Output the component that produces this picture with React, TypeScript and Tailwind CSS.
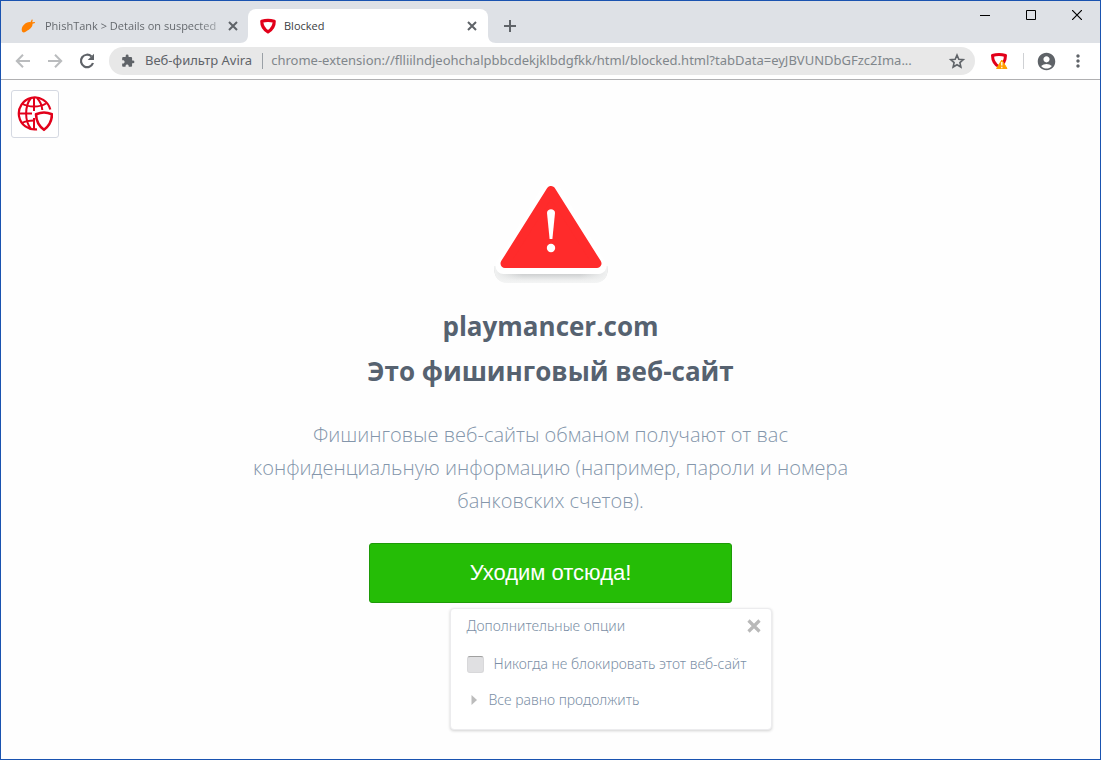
import type { ReactNode } from "react";
import { MdAccountCircle, MdExtension, MdMoreVert } from "react-icons/md";

function PhishIcon() {
  return (
    <svg viewBox="0 0 16 16" className="h-4 w-4 shrink-0" aria-hidden="true">
      <path
        d="M2 13.500C1.100 10.900 2.200 8.300 4 6.700 5.900 4.900 8.200 3.800 10.400 4.200L11.800 1.400l1 .3-.6 2.600 2.600-.4.200 1-2.500.9c.2 1.800-.7 3.300-1.900 4.500C9 12.100 7.800 12.200 6.400 13.300c-1.300 1.100-3 1.700-4.400.2z"
        fill="#ff8000"
      />
    </svg>
  );
}

function ShieldIcon() {
  return (
    <svg viewBox="0 0 16 16" className="h-4 w-4 shrink-0" aria-hidden="true">
      <path
        d="M8 2.300c2.300 0 4 .3 6.200 1 .1 4.600-1.900 8-6.200 10.600C3.700 11.300 1.700 7.900 1.800 3.300 4 2.600 5.700 2.300 8 2.300z"
        fill="#fff"
        stroke="#e2001a"
        strokeWidth="3.200"
        strokeLinejoin="round"
      />
    </svg>
  );
}

function ShieldWarningIcon() {
  return (
    <svg viewBox="0 0 18 18" className="h-[18px] w-[18px]" aria-hidden="true">
      <path
        d="M9 2.500c2.300 0 4.300.3 6.500 1-.1 5-2 8.800-6.500 11.200C4.500 12.300 2.600 8.500 2.500 3.500c2.200-.7 4.200-1 6.500-1z"
        fill="#fff"
        stroke="#e2001a"
        strokeWidth="3"
        strokeLinejoin="round"
      />
      <path d="M11.800 8 17 16.500H6.600z" fill="#ffa000" stroke="#ffa000" strokeLinejoin="round" />
      <path d="M11.800 10v3.600M11.800 14.800v1.400" stroke="#fff" strokeWidth="1.300" />
    </svg>
  );
}

function GlobeShieldLogo() {
  return (
    <svg viewBox="0 0 36 36" className="h-9 w-9" fill="none" stroke="#e2001a" strokeWidth="2" aria-hidden="true">
      <path d="M33.300 13.500A16 16 0 1 0 20 33.300" strokeWidth="2.200" />
      <path d="M17 1v14M17 22v11M1 17.500h14" />
      <path d="M14 2C7.500 10 7.500 25 14 33" />
      <path d="M20 2c3.500 3.600 5 7.600 5.300 12" />
      <path d="M5 7.500c6.500 4 17.500 4 24 0" />
      <path d="M5 27c3-1.700 7-2.500 12-2.500" />
      <path
        d="M27 16.500c3 0 5.600.8 8 1.800-.2 6.800-2.700 11.700-8 15.500-5.300-3.800-7.800-8.700-8-15.500 2.400-1 5-1.800 8-1.800z"
        fill="#fff"
        strokeWidth="2.600"
        strokeLinejoin="round"
      />
    </svg>
  );
}

function WarningTriangle() {
  return (
    <svg viewBox="0 0 122 108" className="h-[108px] w-[122px]" role="img" aria-label="Внимание">
      <defs>
        <linearGradient id="shade" x1="0" y1="84" x2="0" y2="103" gradientUnits="userSpaceOnUse">
          <stop offset="0.500" stopColor="#cbcdce" />
          <stop offset="0.850" stopColor="#eeefef" />
          <stop offset="1" stopColor="#f4f5f5" />
        </linearGradient>
        <linearGradient id="fade" x1="0" y1="0" x2="1" y2="0">
          <stop offset="0" stopColor="#f2f3f3" />
          <stop offset="0.250" stopColor="#f2f3f3" stopOpacity="0" />
          <stop offset="0.750" stopColor="#f2f3f3" stopOpacity="0" />
          <stop offset="1" stopColor="#f2f3f3" />
        </linearGradient>
      </defs>
      <path d="M4 86h114c0 12-5 17-14 17H18C9 103 4 98 4 86z" fill="url(#shade)" />
      <path d="M4 86h114c0 12-5 17-14 17H18C9 103 4 98 4 86z" fill="url(#fade)" />
      <path
        d="M61 8 108.500 86H13.500z"
        fill="#fff"
        stroke="#fff"
        strokeWidth="16"
        strokeLinejoin="round"
      />
      <path
        d="M61 10.500 107 83.500H15z"
        fill="#ff2b2b"
        stroke="#ff2b2b"
        strokeWidth="9"
        strokeLinejoin="round"
      />
      <path d="M57 33c0-5 8-5 8 0l-2.600 26h-2.800z" fill="#fff" />
      <circle cx="61" cy="68" r="4.200" fill="#fff" />
    </svg>
  );
}

function LineIcon({ d }: { d: string }) {
  return (
    <svg
      viewBox="0 0 20 20"
      className="h-5 w-5 shrink-0"
      fill="none"
      stroke="currentColor"
      strokeWidth="2"
      aria-hidden="true"
    >
      <path d={d} />
    </svg>
  );
}

function IconButton({ label, className, children }: { label: string; className: string; children: ReactNode }) {
  return (
    <button type="button" aria-label={label} className={`flex shrink-0 items-center justify-center ${className}`}>
      {children}
    </button>
  );
}

const CLOSE = "m6 6 8 8M14 6l-8 8";

function TabStrip() {
  return (
    <div className="flex h-[42px] items-start bg-[#dee1e6] pl-2">
      <div className="flex min-w-0 flex-1 items-end pt-2">
        <div className="flex h-[34px] w-[239px] items-center pr-[7px] pl-[11px]">
          <PhishIcon />
          <span className="ml-[9px] flex-1 bg-linear-to-r from-[#5f6368] from-85% to-[#5f636840] bg-clip-text text-[11px] whitespace-nowrap text-transparent">
            PhishTank &gt; Details on suspected
          </span>
          <IconButton label="Закрыть вкладку" className="h-4 w-4 text-[#5f6368]">
            <LineIcon d={CLOSE} />
          </IconButton>
        </div>
        <svg viewBox="0 0 8 8" className="-ml-2 h-2 w-2 shrink-0" aria-hidden="true">
          <path d="M8 0v8H0c5 0 8-3 8-8z" fill="#fff" />
        </svg>
        <div className="flex h-[34px] w-60 items-center rounded-t-lg bg-white pr-2 pl-3">
          <ShieldIcon />
          <span className="ml-2 flex-1 text-[11px] text-[#3c4043]">Blocked</span>
          <IconButton label="Закрыть вкладку" className="h-4 w-4 text-[#5f6368]">
            <LineIcon d={CLOSE} />
          </IconButton>
        </div>
        <svg viewBox="0 0 8 8" className="h-2 w-2 shrink-0" aria-hidden="true">
          <path d="M0 0v8h8C3 8 0 5 0 0z" fill="#fff" />
        </svg>
        <IconButton label="Новая вкладка" className="h-[34px] w-7 text-[#5f6368]">
          <LineIcon d="M10 4v12M4 10h12" />
        </IconButton>
      </div>
      <div className="flex text-black">
        <IconButton label="Свернуть" className="h-7 w-[46px]">
          <svg viewBox="0 0 10 10" className="h-[10px] w-[10px]" aria-hidden="true">
            <path d="M0 5.500h10" stroke="currentColor" />
          </svg>
        </IconButton>
        <IconButton label="Развернуть" className="h-7 w-[46px]">
          <svg viewBox="0 0 10 10" className="h-[10px] w-[10px]" aria-hidden="true">
            <path d="M.5.5h9v9h-9z" fill="none" stroke="currentColor" />
          </svg>
        </IconButton>
        <IconButton label="Закрыть" className="h-7 w-[46px]">
          <svg viewBox="0 0 10 10" className="h-[10px] w-[10px]" aria-hidden="true">
            <path d="m0 0 10 10M10 0 0 10" stroke="currentColor" strokeWidth="1.200" />
          </svg>
        </IconButton>
      </div>
    </div>
  );
}

function Toolbar() {
  return (
    <div className="flex h-[37px] items-center border-b border-[#b0b0b2] bg-white pl-[6px]">
      <IconButton label="Назад" className="h-8 w-8 text-[#babcbe]">
        <LineIcon d="M17 10H4.500M10 3.800 3.800 10l6.200 6.200" />
      </IconButton>
      <IconButton label="Вперёд" className="h-8 w-8 text-[#babcbe]">
        <LineIcon d="M3 10h12.500M10 3.800l6.200 6.200-6.200 6.200" />
      </IconButton>
      <IconButton label="Обновить" className="h-8 w-8 text-[#5f6368]">
        <svg viewBox="0 0 20 20" className="h-5 w-5" aria-hidden="true">
          <path
            d="M14.500 5.500A6.200 6.200 0 1 0 16 12"
            fill="none"
            stroke="currentColor"
            strokeWidth="2.200"
          />
          <path d="M17 2.700V9h-6.300z" fill="currentColor" />
        </svg>
      </IconButton>
      <div className="ml-[6px] flex h-7 min-w-0 flex-1 items-center rounded-full bg-[#e8e8e8] pr-[10px] pl-3 font-['Noto_Sans',sans-serif] text-[13px]">
        <MdExtension size={14} className="shrink-0 text-[#5f6368]" />
        <span className="ml-[10px] shrink-0 text-[#5f6368]">Веб-фильтр Avira</span>
        <span className="ml-[10px] h-4 w-px shrink-0 bg-[#9aa0a6]" />
        <span className="ml-2 min-w-0 flex-1 truncate text-[#80868b]">
          chrome-extension://flliilndjeohchalpbbcdekjklbdgfkk/html/blocked.html?tabData=eyJBVUNDbGFzc2Ima...
        </span>
        <IconButton label="Добавить в закладки" className="ml-2 h-4 w-4 text-[#5f6368]">
          <svg viewBox="0 0 18 18" className="h-[18px] w-[18px] shrink-0" aria-hidden="true">
            <path
              d="m9 3 1.800 4.200 4.500.4-3.400 3 1 4.400L9 12.700 5.100 15l1-4.400-3.400-3 4.500-.4z"
              fill="none"
              stroke="currentColor"
              strokeWidth="1.600"
            />
          </svg>
        </IconButton>
      </div>
      <IconButton label="Avira" className="w-12">
        <ShieldWarningIcon />
      </IconButton>
      <span className="h-4 w-px bg-[#cfd1d4]" />
      <IconButton label="Профиль" className="w-11 text-[#5f6368]">
        <MdAccountCircle size={21} />
      </IconButton>
      <IconButton label="Меню" className="mr-3 w-5 text-[#5f6368]">
        <MdMoreVert size={20} />
      </IconButton>
    </div>
  );
}

function OptionsPanel() {
  return (
    <section className="h-[122px] w-[322px] rounded-sm border border-[#ececee] bg-white px-4 pt-[6px] font-['Noto_Sans',sans-serif] text-[14px] leading-[22px] font-light text-[#7b8fa6] shadow-[0_1px_3px_rgba(0,0,0,0.18)]">
      <div className="flex items-center justify-between">
        <h2>Дополнительные опции</h2>
        <button type="button" aria-label="Закрыть" className="-mr-[6px] text-[#b9b9b9]">
          <svg viewBox="0 0 14 14" className="h-[14px] w-[14px]" aria-hidden="true">
            <path d="m1.500 1.500 11 11M12.500 1.500l-11 11" stroke="currentColor" strokeWidth="3.200" />
          </svg>
        </button>
      </div>
      <label className="mt-4 flex items-center gap-[10px] whitespace-nowrap">
        <input
          type="checkbox"
          className="h-[17px] w-[17px] shrink-0 appearance-none rounded-[3px] border border-[#d8d8da] border-t-[#a0a0a0] bg-[#e0e0e2]"
        />
        Никогда не блокировать этот веб-сайт
      </label>
      <button type="button" className="mt-[14px] flex items-center gap-3 pl-1">
        <svg viewBox="0 0 6 10" className="h-[10px] w-[6px]" aria-hidden="true">
          <path d="M.5 0 6 5 .5 10z" fill="#bcbcbc" />
        </svg>
        Все равно продолжить
      </button>
    </section>
  );
}

export default function App() {
  return (
    <div className="flex min-h-screen flex-col border border-[#1a53b0] bg-[#fefefe] font-['Open_Sans','Noto_Sans',sans-serif]">
      <TabStrip />
      <Toolbar />
      <main className="flex flex-1 flex-col px-[10px] pt-[10px] pb-7">
        <div className="flex h-12 w-12 items-center justify-center rounded-[3px] border border-[#d5d9e2] bg-white">
          <GlobeShieldLogo />
        </div>
        <div className="mt-[42px] flex flex-col items-center text-center">
          <WarningTriangle />
          <h1 className="mt-4 text-[26px] leading-[45px] font-bold text-[#566270]">
            playmancer.com
            <br />
            Это фишинговый веб-сайт
          </h1>
          <p className="mt-6 w-[640px] max-w-full text-[20px] leading-[33px] font-light text-[#8496ab]">
            Фишинговые веб-сайты обманом получают от вас
            <br />
            конфиденциальную информацию (например, пароли и номера
            <br />
            банковских счетов).
          </p>
          <button
            type="button"
            className="mt-[26px] h-[60px] w-[363px] rounded-[3px] border border-[#1e9a08] bg-[#25bd06] pb-[2px] font-['Liberation_Sans',sans-serif] text-[22px] text-white"
          >
            Уходим отсюда!
          </button>
        </div>
        <div className="mt-[5px] flex justify-center pl-[120px]">
          <OptionsPanel />
        </div>
      </main>
    </div>
  );
}
